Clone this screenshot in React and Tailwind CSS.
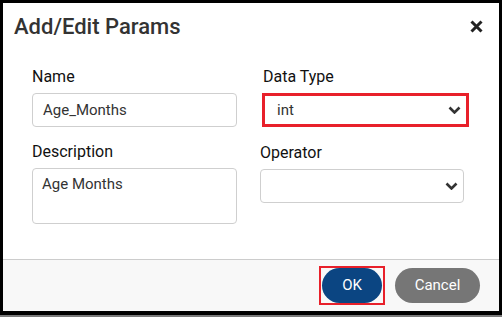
import React from 'react';

const Chevron = () => (
  <svg width="13" height="8" viewBox="0 0 13 8" className="shrink-0">
    <path d="M1.5 1.5 L6.5 6.5 L11.5 1.5" fill="none" stroke="#333" strokeWidth="2.6" />
  </svg>
);

const Label = ({ children, className = '' }) => (
  <div className={`text-[16px] leading-[20px] text-[#111] ${className}`}>{children}</div>
);

const App = () => {
  return (
    <div
      className="w-[502px] h-[317px] bg-black pt-[3px] px-[3px] pb-[4px] border-b-2 border-[#7a7a7a] flex flex-col"
      style={{ fontFamily: 'Roboto, "Liberation Sans", sans-serif' }}
    >
      <div className="flex-1 flex flex-col bg-white">
        <div className="h-[256px]">
          <div className="flex items-start justify-between pt-[11px] pl-[11px] pr-[16px]">
            <h1 className="text-[22px] leading-[26px] font-medium text-[#333]">Add/Edit Params</h1>
            <svg width="13" height="13" viewBox="0 0 13 13" className="mt-[6px]">
              <path d="M1.5 1.5 L11.5 11.5 M11.5 1.5 L1.5 11.5" stroke="#222" strokeWidth="3" />
            </svg>
          </div>

          <div className="flex gap-[23px] pl-[29px] mt-[27px]">
            <div className="w-[205px]">
              <Label>Name</Label>
              <div className="mt-[6px] h-[34px] border border-[#cfcfcf] rounded-[4px] flex items-center pl-[10px] text-[15px] text-[#333]">
                Age_Months
              </div>
              <Label className="mt-[15px]">Description</Label>
              <div className="mt-[6px] h-[56px] border border-[#cfcfcf] rounded-[4px] pl-[9px] pt-[5px] text-[15px] leading-[20px] text-[#333]">
                Age Months
              </div>
            </div>

            <div className="w-[204px]">
              <Label className="ml-[3px]">Data Type</Label>
              <div className="mt-[6px] ml-[2px] w-[207px] h-[34px] border-[3px] border-[#e8202a] flex items-center justify-between pl-[12px] pr-[5px] text-[15px] text-[#333]">
                <span>int</span>
                <Chevron />
              </div>
              <Label className="mt-[16px]">Operator</Label>
              <div className="mt-[6px] h-[34px] border border-[#cfcfcf] rounded-[4px] flex items-center justify-end pr-[5px]">
                <Chevron />
              </div>
            </div>
          </div>
        </div>

        <div className="flex-1 border-t border-[#cccccc] bg-[#f8f8f8] flex items-start justify-end pt-[6px] pr-[19px] gap-[10px]">
          <div className="border-2 border-[#e8202a] px-[1px]">
            <button className="w-[60px] h-[35px] rounded-full bg-[#0b4582] text-white text-[15px]">OK</button>
          </div>
          <button className="mt-[2px] w-[85px] h-[35px] rounded-full bg-[#767676] text-white text-[15px]">Cancel</button>
        </div>
      </div>
    </div>
  );
};

export default App;
